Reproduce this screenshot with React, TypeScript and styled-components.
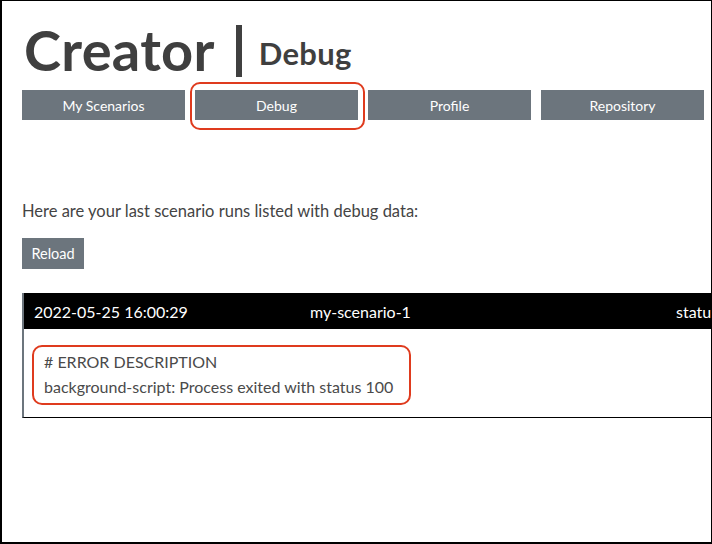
import React from "react";
import styled, { createGlobalStyle } from "styled-components";

const Global = createGlobalStyle`
  html, body { margin: 0; padding: 0; background: #fff; }
  body { font-family: Lato, "Noto Sans", sans-serif; }
  * { box-sizing: border-box; }
`;

const Frame = styled.div`
  width: 712px;
  height: 544px;
  border-style: solid;
  border-color: #000;
  border-width: 1px 1px 2px 2px;
  overflow: hidden;
  background: #fff;
  padding: 21px 0 0 20px;
  color: #444;
`;

const TitleRow = styled.div`
  display: flex;
  align-items: center;
  height: 56px;
`;

const Title = styled.h1`
  margin: 0;
  font-size: 56px;
  font-weight: 700;
  color: #3f3f3f;
  letter-spacing: 0.3px;
  line-height: 1;
  padding-left: 2px;
`;

const Divider = styled.span`
  display: block;
  width: 6px;
  height: 52px;
  background: #404040;
  margin: 2px 17px 0 21px;
`;

const SubTitle = styled.h2`
  margin: 0;
  font-size: 31px;
  font-weight: 700;
  color: #3f3f3f;
  line-height: 1;
  padding-top: 7px;
  letter-spacing: 0.3px;
`;

const Nav = styled.nav`
  display: grid;
  grid-template-columns: repeat(4, 163px);
  column-gap: 10px;
  margin-top: 12px;
`;

const NavSlot = styled.div`
  position: relative;
`;

const NavButton = styled.button`
  width: 100%;
  height: 30px;
  border: none;
  background: #6c757d;
  color: #fff;
  font-family: inherit;
  font-size: 14px;
  padding: 0;
  cursor: pointer;
`;

const Highlight = styled.span<{ $t: number; $r: number; $b: number; $l: number }>`
  position: absolute;
  top: ${(p) => p.$t}px;
  right: ${(p) => p.$r}px;
  bottom: ${(p) => p.$b}px;
  left: ${(p) => p.$l}px;
  border: 2px solid #df3b1e;
  border-radius: 10px;
  pointer-events: none;
`;

const Intro = styled.p`
  margin: 81px 0 0 0;
  font-size: 16.5px;
  line-height: 20px;
  color: #444;
`;

const ReloadButton = styled.button`
  display: block;
  margin: 17px 0 0 0;
  height: 31px;
  width: 62px;
  border: none;
  background: #6c757d;
  color: #fff;
  font-family: inherit;
  font-size: 14.5px;
  padding: 0;
`;

const RunCard = styled.section`
  margin: 24px 0 0 0;
  width: 720px;
  border-left: 2px solid #6c757d;
  border-bottom: 1px solid #000;
`;

const RunHeader = styled.div`
  display: grid;
  grid-template-columns: 276px 366px auto;
  align-items: center;
  height: 36px;
  background: #000;
  color: #fff;
  font-size: 16px;
  padding-left: 10px;
  white-space: nowrap;
`;

const RunBody = styled.div`
  padding: 20px 0 18px 20px;
`;

const ErrorBox = styled.div`
  position: relative;
  display: inline-block;
  font-size: 16px;
  line-height: 25px;
  color: #4a4a4a;
`;

const ErrorLine = styled.div``;

export default function App() {
  const tabs = ["My Scenarios", "Debug", "Profile", "Repository"];
  return (
    <>
      <Global />
      <Frame>
        <TitleRow>
          <Title>Creator</Title>
          <Divider />
          <SubTitle>Debug</SubTitle>
        </TitleRow>
        <Nav>
          {tabs.map((t) => (
            <NavSlot key={t}>
              <NavButton>{t}</NavButton>
              {t === "Debug" && <Highlight $t={-8} $r={-7} $b={-10} $l={-5} />}
            </NavSlot>
          ))}
        </Nav>
        <Intro>Here are your last scenario runs listed with debug data:</Intro>
        <ReloadButton>Reload</ReloadButton>
        <RunCard>
          <RunHeader>
            <span>2022-05-25 16:00:29</span>
            <span>my-scenario-1</span>
            <span>status</span>
          </RunHeader>
          <RunBody>
            <ErrorBox>
              <ErrorLine># ERROR DESCRIPTION</ErrorLine>
              <ErrorLine>background-script: Process exited with status 100</ErrorLine>
              <Highlight $t={-4} $r={-18} $b={-6} $l={-12} />
            </ErrorBox>
          </RunBody>
        </RunCard>
      </Frame>
    </>
  );
}
